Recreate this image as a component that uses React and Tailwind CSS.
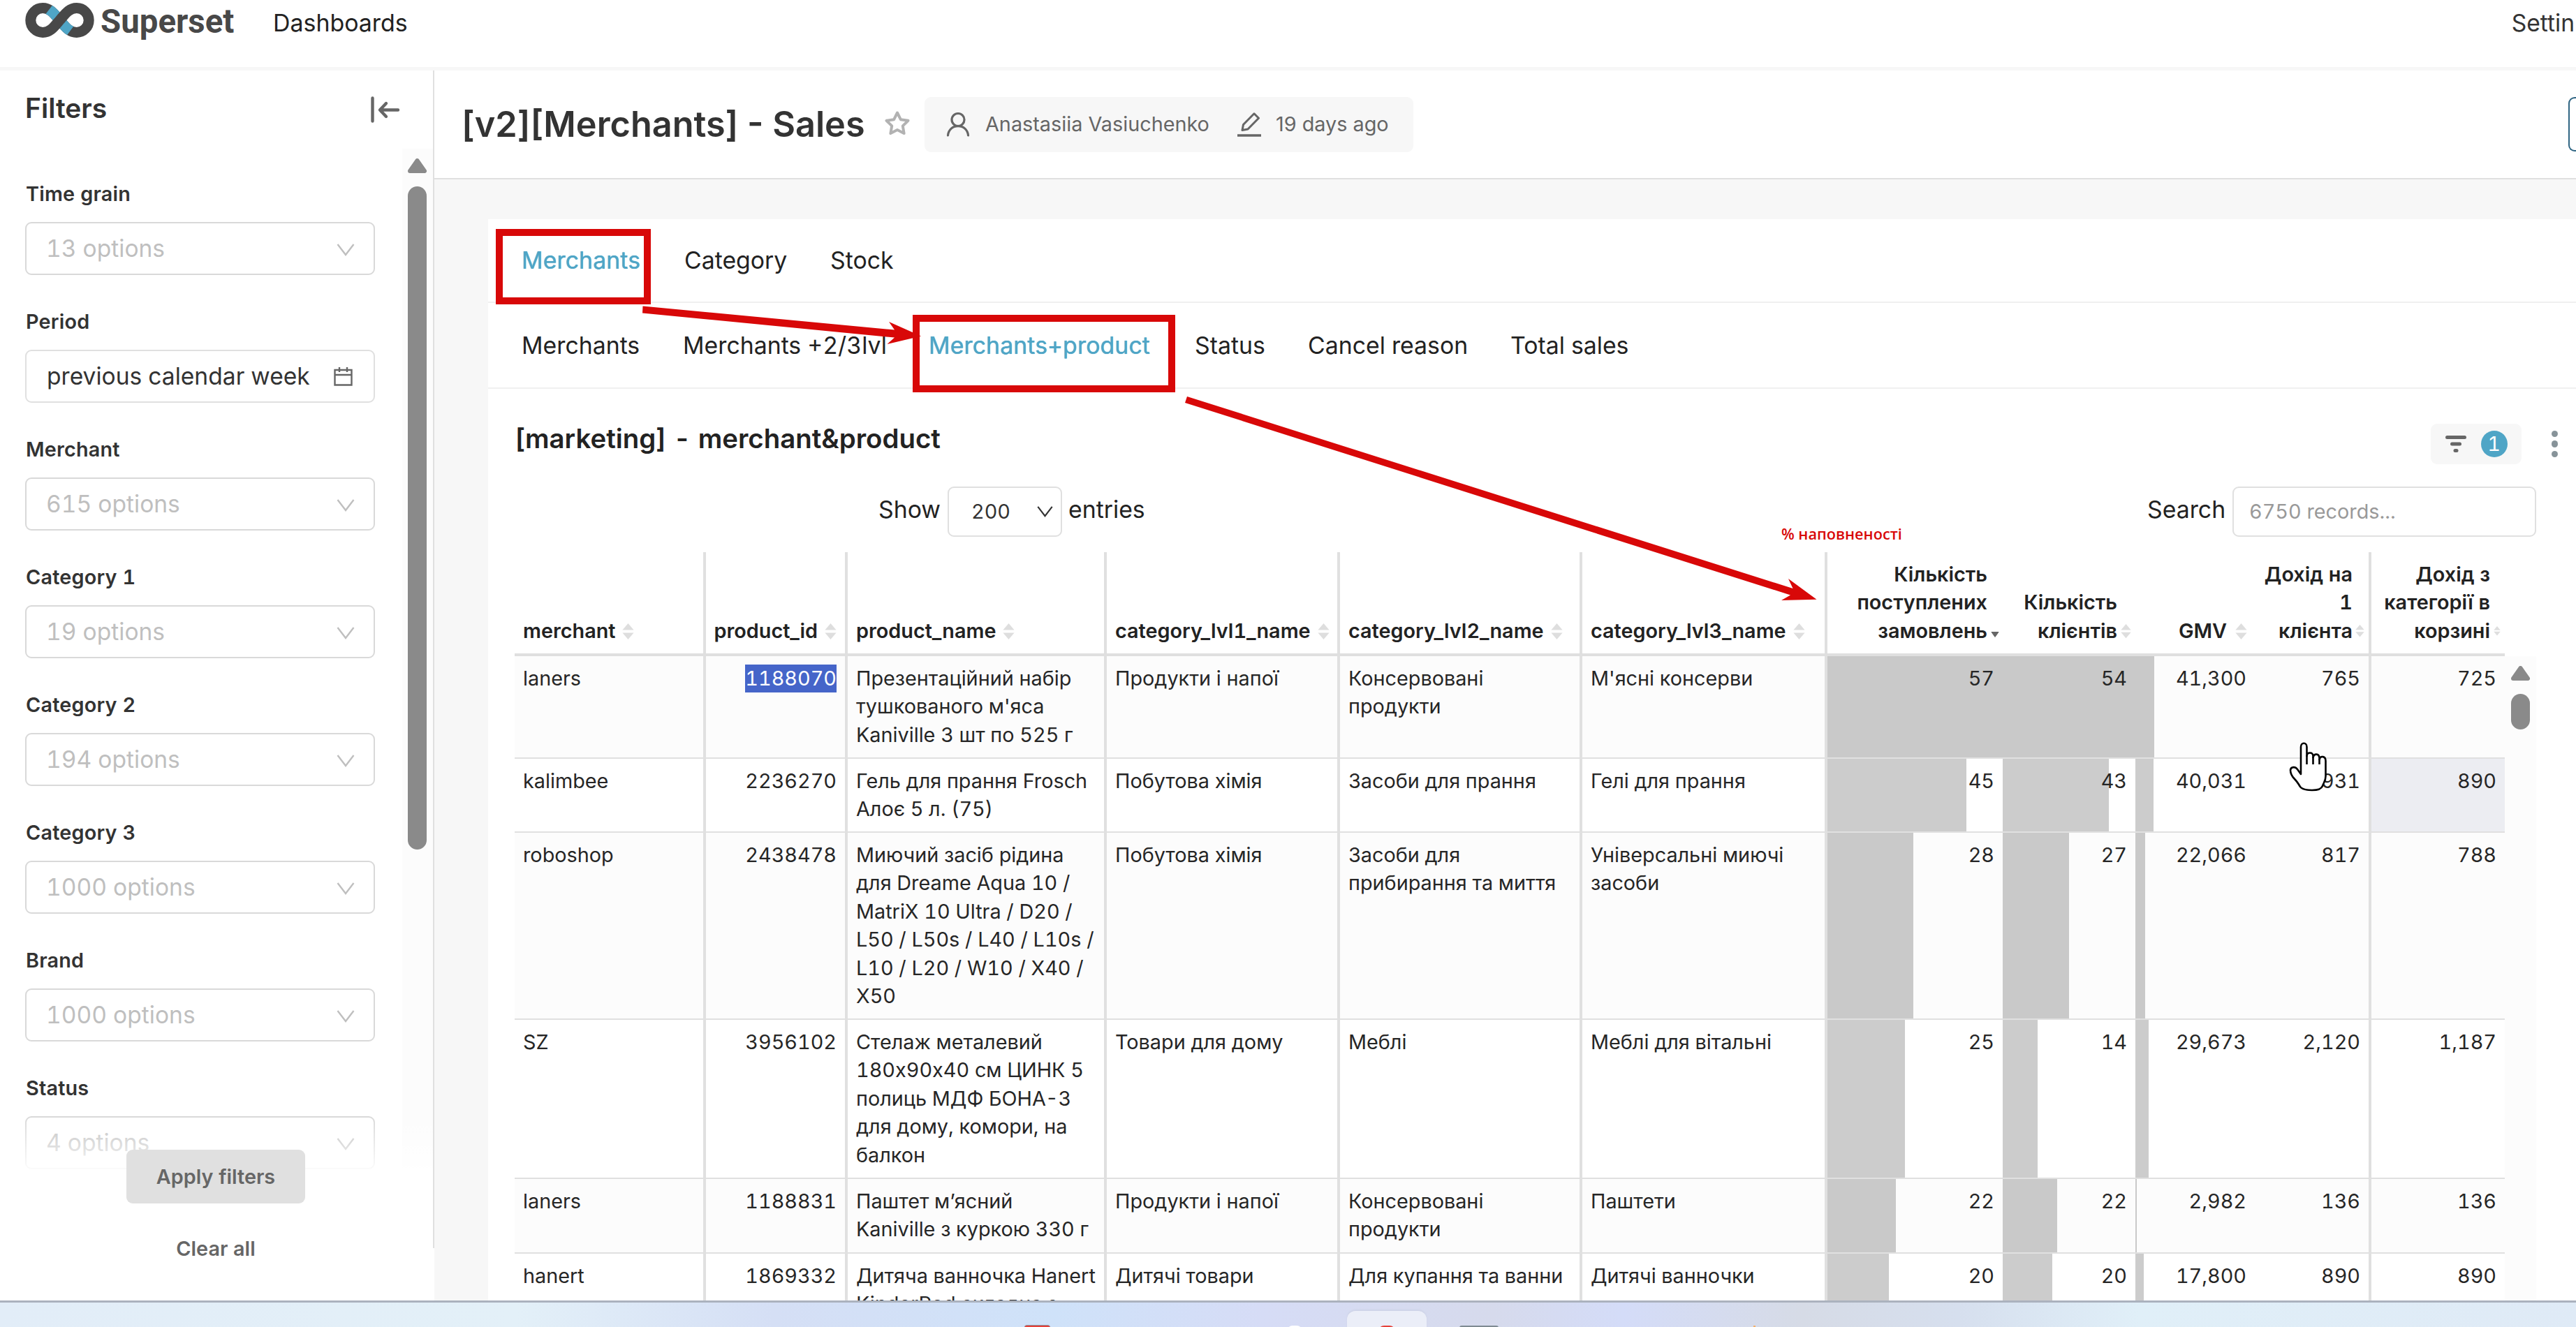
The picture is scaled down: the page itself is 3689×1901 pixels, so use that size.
import { useState } from "react";

const FILTERS = [
  { label: "Time grain", text: "13 options" },
  { label: "Period", text: "previous calendar week", date: true },
  { label: "Merchant", text: "615 options" },
  { label: "Category 1", text: "19 options" },
  { label: "Category 2", text: "194 options" },
  { label: "Category 3", text: "1000 options" },
  { label: "Brand", text: "1000 options" },
  { label: "Status", text: "4 options" },
];

const MAIN_TABS = [
  ["Merchants", "w-[233px]"],
  ["Category", "w-[209px]"],
  ["Stock", "w-[120px]"],
];

const SUB_TABS = [
  ["Merchants", "w-[231px]"],
  ["Merchants +2/3lvl", "w-[352px]"],
  ["Merchants+product", "w-[381px]"],
  ["Status", "w-[162px]"],
  ["Cancel reason", "w-[290px]"],
  ["Total sales", "w-[200px]"],
];

const GRID =
  "grid grid-cols-[274px_203px_371px_334px_347px_351px_251px_190px_171px_167px_191px]";

const COLUMNS = [
  { label: "merchant", cell: "pl-3 gap-[10px] border-r-4", icon: "w-[17px]" },
  {
    label: "product_id",
    cell: "justify-end pr-3 gap-[10px] border-r-4",
    icon: "w-[17px]",
  },
  { label: "product_name", cell: "pl-3 gap-[10px] border-r-4", icon: "w-[17px]" },
  {
    label: "category_lvl1_name",
    cell: "pl-3 gap-[10px] border-r-4",
    icon: "w-[17px]",
  },
  {
    label: "category_lvl2_name",
    cell: "pl-3 gap-[10px] border-r-4",
    icon: "w-[17px]",
  },
  {
    label: "category_lvl3_name",
    cell: "pl-3 gap-[10px] border-r-4",
    icon: "w-[17px]",
  },
  {
    label: "Кількість\nпоступлених\nзамовлень",
    cell: "justify-end pr-[5px] gap-[5px]",
    icon: "w-[12px]",
    sorted: true,
  },
  {
    label: "Кількість\nклієнтів",
    cell: "justify-end pr-[6px] gap-[5px]",
    icon: "w-[15px]",
  },
  { label: "GMV", cell: "justify-end pr-[11px] gap-3", icon: "w-[17px]" },
  {
    label: "Дохід на\n1\nклієнта",
    cell: "justify-end pr-[6px] gap-1 border-r-4",
    icon: "w-[13px]",
  },
  {
    label: "Дохід з\nкатегорії в\nкорзині",
    cell: "justify-end pr-[6px] gap-[5px]",
    icon: "w-[10px]",
  },
];

// bars: pixel widths of the in-cell bars for orders, clients and GMV
const ROWS = [
  {
    height: "h-[147px]",
    merchant: "laners",
    id: "1188070",
    name: "Презентаційний набір тушкованого м'яса Kaniville 3 шт по 525 г",
    cats: ["Продукти і напої", "Консервовані продукти", "М'ясні консерви"],
    values: ["57", "54", "41,300", "765", "725"],
    bars: [251, 190, 27],
    selected: true,
  },
  {
    height: "h-[106px]",
    merchant: "kalimbee",
    id: "2236270",
    name: "Гель для прання Frosch Алоє 5 л. (75)",
    cats: ["Побутова хімія", "Засоби для прання", "Гелі для прання"],
    values: ["45", "43", "40,031", "931", "890"],
    bars: [199, 152, 26],
    hovered: true,
  },
  {
    height: "h-[268px]",
    merchant: "roboshop",
    id: "2438478",
    name: "Миючий засіб рідина для Dreame Aqua 10 / MatriX 10 Ultra / D20 / L50 / L50s / L40 / L10s / L10 / L20 / W10 / X40 / X50",
    cats: [
      "Побутова хімія",
      "Засоби для прибирання та миття",
      "Універсальні миючі засоби",
    ],
    values: ["28", "27", "22,066", "817", "788"],
    bars: [123, 95, 14],
  },
  {
    height: "h-[228px]",
    merchant: "SZ",
    id: "3956102",
    name: "Стелаж металевий 180х90х40 см ЦИНК 5 полиць МДФ БОНА-3 для дому, комори, на балкон",
    cats: ["Товари для дому", "Меблі", "Меблі для вітальні"],
    values: ["25", "14", "29,673", "2,120", "1,187"],
    bars: [111, 50, 19],
  },
  {
    height: "h-[107px]",
    merchant: "laners",
    id: "1188831",
    name: "Паштет м’ясний Kaniville з куркою 330 г",
    cats: ["Продукти і напої", "Консервовані продукти", "Паштети"],
    values: ["22", "22", "2,982", "136", "136"],
    bars: [98, 78, 2],
  },
  {
    height: "h-[147px]",
    merchant: "hanert",
    id: "1869332",
    name: "Дитяча ванночка Hanert KinderPod складна з",
    cats: ["Дитячі товари", "Для купання та ванни", "Дитячі ванночки"],
    values: ["20", "20", "17,800", "890", "890"],
    bars: [88, 71, 12],
  },
];

function Logo() {
  return (
    <svg viewBox="0 0 99 50" className="h-[50px] w-[99px]" fill="none">
      <clipPath id="logo-strand">
        <path d="M41 1 L75 26 L58 49 L25 21.8Z" />
      </clipPath>
      <g strokeWidth="15">
        <path
          d="M49.500 25 C41 15 36 7.600 25.200 7.600 A17.400 17.400 0 1 0 25.200 42.400 M73.800 7.600 A17.400 17.400 0 1 1 73.800 42.400 C63 42.400 58 35 49.500 25"
          stroke="#484848"
        />
        <path
          d="M25.200 7.600 C36 7.600 41 15 49.500 25 C58 35 63 42.400 73.800 42.400"
          stroke="#4fa5c6"
          clipPath="url(#logo-strand)"
        />
        <path
          d="M25 42.400 H25.200 C36 42.400 41 35 49.500 25 C58 15 63 7.600 73.800 7.600 H74"
          stroke="#484848"
        />
      </g>
    </svg>
  );
}

function Chevron({ className }) {
  return (
    <svg viewBox="0 0 26 18" className={className} fill="none">
      <path d="M1.5 1 L13 16 L24.5 1" stroke="currentColor" strokeWidth="2.4" />
    </svg>
  );
}

function SortIcon({ className, sorted }) {
  if (sorted) {
    return (
      <svg viewBox="0 0 12 23" className={className}>
        <path d="M1 12.5h10l-5 7z" fill="#666" stroke="#666" strokeLinejoin="round" />
      </svg>
    );
  }
  return (
    <svg viewBox="0 0 17 23" className={className} fill="#dedede">
      <path d="M8.5 0 L16.6 9.6 H0.4Z" />
      <path d="M8.5 23 L16.6 13.4 H0.4Z" />
    </svg>
  );
}

function ScrollArrow() {
  return (
    <svg viewBox="0 0 27 21" className="h-[21px] w-[27px]">
      <path
        d="M13.5 3 L24 18 H3Z"
        fill="#8a8a8a"
        stroke="#8a8a8a"
        strokeWidth="6"
        strokeLinejoin="round"
      />
    </svg>
  );
}

function Navbar() {
  return (
    <header className="flex h-[101px] shrink-0 justify-between border-b-[5px] border-[#f7f7f7] bg-white pl-9">
      <div className="flex">
        <div className="pt-1">
          <Logo />
        </div>
        <span className="mt-[3px] ml-[9px] w-[247px] font-['Roboto',sans-serif] text-[47.4px] leading-[56px] font-bold text-[#484848]">
          Superset
        </span>
        <span className="mt-3 text-[33.9px] leading-[41px] text-[#222]">
          Dashboards
        </span>
      </div>
      <span className="mt-3 pr-[2px] text-[33.6px] leading-[41px] text-[#333]">
        Settin
      </span>
    </header>
  );
}

function FilterField({ label, text, date }) {
  return (
    <div className="mb-[47px] last:mb-0">
      <label className="mb-5 block pl-[1px] text-[28.8px] leading-10 font-semibold tracking-[0.2px] text-[#333]">
        {label}
      </label>
      <div
        className={
          date
            ? "flex h-[76px] items-center justify-between rounded-[9px] border-2 border-[#e0e0e0] pr-[30px] pl-[29px] text-[33.6px] text-[#333]"
            : "flex h-[76px] items-center justify-between rounded-[9px] border-2 border-[#d9d9d9] pr-[27px] pl-[28px] text-[33.6px] text-[#bfbfbf]"
        }
      >
        <span>{text}</span>
        {date ? (
          <svg viewBox="0 0 27 27" className="size-[27px] text-[#666]" fill="none">
            <path
              d="M1.5 4h24v21.5h-24zM1.5 11h24M8 0v7M19 0v7"
              stroke="currentColor"
              strokeWidth="2.4"
            />
          </svg>
        ) : (
          <Chevron className="mt-1 h-[18px] w-[26px]" />
        )}
      </div>
    </div>
  );
}

function Sidebar() {
  return (
    <aside className="relative flex h-[1762px] w-[622px] shrink-0 flex-col overflow-hidden bg-white tabular-nums">
      <div className="flex h-[112px] shrink-0 items-start justify-between pr-[49px] pl-[36px]">
        <h2 className="mt-[29px] text-[39px] leading-[50px] font-semibold text-[#333]">
          Filters
        </h2>
        <svg
          viewBox="0 0 42 38"
          className="mt-[37px] h-[38px] w-[42px]"
          fill="none"
          stroke="#666"
          strokeWidth="4.4"
          strokeLinecap="round"
          strokeLinejoin="round"
        >
          <path d="M2.5 2.5v33M39 19.5H14M22 10l-9 9.5 9 9.5" />
        </svg>
      </div>
      <div className="flex min-h-0 flex-1">
        <div className="w-[576px] shrink-0 pt-[45px] pr-[39px] pl-9">
          {FILTERS.map((f) => (
            <FilterField key={f.label} {...f} />
          ))}
        </div>
        <div className="flex h-[1460px] flex-1 flex-col items-center bg-[#fcfcfc] pt-[14px] pr-[3px]">
          <ScrollArrow />
          <div className="mt-[19px] h-[950px] w-[27px] rounded-full bg-[#8a8a8a]" />
        </div>
      </div>

      {/* Actions fade over the end of the filter list */}
      <div className="absolute bottom-0 left-0 flex h-[264px] w-[620px] flex-col items-center bg-linear-to-b from-white/0 to-white to-[86px] pt-12 text-[28.8px] font-semibold text-[#666]">
        <button className="-ml-[2px] h-[77px] w-[256px] rounded-[9px] bg-[#e0e0e0]">
          Apply filters
        </button>
        <button className="mt-[43px] -ml-[2px] h-[40px]">Clear all</button>
      </div>
      <div className="absolute top-0 right-0 h-[1687px] w-[2px] bg-[#e0e0e0]" />
    </aside>
  );
}

function DashboardHeader() {
  return (
    <div className="flex h-[156px] shrink-0 items-center justify-between border-b-2 border-[#e0e0e0] bg-white pl-[39px]">
      <div className="flex items-center">
        <h1 className="w-[605px] text-[50.4px] leading-[60px] font-semibold whitespace-nowrap text-[#333]">
          [v2][Merchants] - Sales
        </h1>
        <svg viewBox="0 0 38 36" className="-mt-1 mr-5 h-9 w-[38px]" fill="none">
          <path
            d="M19 3.5 L23.8 13.2 L34.5 14.8 L26.8 22.4 L28.6 33 L19 28 L9.4 33 L11.2 22.4 L3.5 14.8 L14.2 13.2Z"
            stroke="#b2b2b2"
            strokeWidth="4"
            strokeLinejoin="round"
          />
        </svg>
        <div className="flex h-[79px] w-[700px] items-center rounded-[9px] bg-[#f7f7f7] pl-[31px] text-[28.8px] text-[#666]">
          <svg viewBox="0 0 34 36" className="mr-[22px] h-9 w-[34px]" fill="none">
            <g stroke="currentColor" strokeWidth="3.2" strokeLinecap="round">
              <circle cx="17" cy="11.5" r="9" />
              <path d="M2.5 34c.6-8 6.600-13.300 14.500-13.300S30.900 26 31.500 34" />
            </g>
          </svg>
          <span className="w-[360px]">Anastasiia Vasiuchenko</span>
          <svg viewBox="0 0 36 36" className="mr-[20px] h-9 w-9" fill="none">
            <path
              d="M8 26.500 L9.500 18.500 L25 2.800 L31.500 9.300 L16 25 Z"
              stroke="currentColor"
              strokeWidth="3"
              strokeLinejoin="round"
            />
            <path d="M1 34h34" stroke="currentColor" strokeWidth="3.600" />
          </svg>
          <span>19 days ago</span>
        </div>
      </div>
      <div className="h-[78px] w-[11px] rounded-l-[9px] border-y-2 border-l-2 border-[#2f6583]" />
    </div>
  );
}

function Tabs({ tabs, active, onChange, className }) {
  return (
    <nav className={className}>
      {tabs.map(([label, width]) => (
        <button
          key={label}
          onClick={() => onChange(label)}
          className={`${width} text-left whitespace-nowrap ${
            active === label
              ? "tracking-[0.1px] text-[#4fa5c6] [text-shadow:0_0_0.8px_currentcolor]"
              : "text-[#222]"
          }`}
        >
          {label}
        </button>
      ))}
    </nav>
  );
}

function ChartHeader() {
  return (
    <div className="flex items-start justify-between pt-[50px] pr-[26px]">
      <h3 className="text-[38.4px] leading-[42px] font-semibold text-[#222]">
        [marketing] - merchant&amp;product
      </h3>
      <div className="flex items-center">
        <div className="flex h-[58px] w-[130px] items-center justify-between rounded-[9px] bg-[#f7f7f7] pr-5 pl-[21px]">
          <svg viewBox="0 0 30 24" className="h-6 w-[30px]" fill="#666">
            <rect x="0" y="0" width="30" height="5" rx="2.5" />
            <rect x="7" y="9.500" width="16" height="5" rx="2.5" />
            <rect x="11.500" y="19" width="7" height="5" rx="2.500" />
          </svg>
          <span className="flex size-[38px] items-center justify-center rounded-full bg-[#4fa5c6] text-[28.8px] text-white">
            1
          </span>
        </div>
        <div className="ml-[43px] flex flex-col gap-[5px]">
          <i className="size-[9.5px] rounded-full bg-[#879399]" />
          <i className="size-[9.5px] rounded-full bg-[#879399]" />
          <i className="size-[9.5px] rounded-full bg-[#879399]" />
        </div>
      </div>
    </div>
  );
}

function TableControls() {
  return (
    <div className="mt-8 flex h-[72px] w-[2895px] items-center pl-[521px] text-[33.8px] text-[#222]">
      <span className="w-[99px] pb-[6px]">Show</span>
      <div className="flex h-[72px] w-[164px] items-center justify-between rounded-[9px] border-2 border-[#e0e0e0] pr-[10px] pl-[32px] text-[28.8px] text-[#333]">
        200
        <Chevron className="h-[16px] w-[25px]" />
      </div>
      <span className="ml-[9px] pb-[6px]">entries</span>
      <span className="ml-auto w-[122px] pb-[6px]">Search</span>
      <div className="flex h-[72px] w-[435px] items-center rounded-[9px] border-2 border-[#e0e0e0] pl-[22px] text-[28.8px] text-[#999]">
        6750 records...
      </div>
    </div>
  );
}

function BarCell({ value, bar }) {
  return (
    <div className="relative h-full">
      <div className="absolute inset-y-0 left-0 bg-black/20" style={{ width: bar }} />
      <span className="relative block pt-3 pr-3 text-right">{value}</span>
    </div>
  );
}

function TableRow({ row, striped }) {
  return (
    <div
      className={`${GRID} ${row.height} border-b-2 border-[#e0e0e0] ${
        striped ? "bg-[#fcfcfc]" : "bg-white"
      }`}
    >
      <div className="border-r-4 border-[#e0e0e0] px-3 pt-3">{row.merchant}</div>
      <div className="border-r-4 border-[#e0e0e0] px-3 pt-3 text-right">
        <span
          className={row.selected ? "inline-block bg-[#4565c9] text-white" : ""}
        >
          {row.id}
        </span>
      </div>
      <div className="border-r-4 border-[#e0e0e0] px-3 pt-3">{row.name}</div>
      {row.cats.map((c) => (
        <div key={c} className="border-r-4 border-[#e0e0e0] px-3 pt-3">
          {c}
        </div>
      ))}
      {row.bars.map((bar, i) => (
        <BarCell key={i} bar={bar} value={row.values[i]} />
      ))}
      <div className="border-r-4 border-[#e0e0e0] px-3 pt-3 text-right">
        {row.values[3]}
      </div>
      <div className={`px-3 pt-3 text-right ${row.hovered ? "bg-[#ecedf2]" : ""}`}>
        {row.values[4]}
      </div>
    </div>
  );
}

function DataTable() {
  return (
    <div className="mt-[22px] w-[2895px] text-[28.8px] leading-[40.4px] text-[#262626]">
      <div className={`${GRID} h-[149px] w-[2850px] border-b-4 border-[#dfdfdf]`}>
        {COLUMNS.map((col) => (
          <div
            key={col.label}
            className={`${col.cell} flex items-end border-[#e0e0e0] pb-3 font-semibold whitespace-nowrap text-[#222]`}
          >
            <span
              className={
                col.label.includes("\n") || col.label === "GMV"
                  ? "text-right whitespace-pre"
                  : ""
              }
            >
              {col.label}
            </span>
            <span className="flex h-10 items-center">
              <SortIcon className={col.icon} sorted={col.sorted} />
            </span>
          </div>
        ))}
      </div>
      <div className="flex">
        <div className="w-[2850px]">
          {ROWS.map((row, i) => (
            <TableRow key={row.id} row={row} striped={i % 2 === 0} />
          ))}
        </div>
        <div className="flex flex-1 flex-col items-center bg-[#fcfcfc] pt-[14px]">
          <ScrollArrow />
          <div className="mt-[19px] h-[51px] w-[27px] rounded-full bg-[#8a8a8a]" />
        </div>
      </div>
    </div>
  );
}

function Annotations() {
  return (
    <>
      <div className="absolute top-[328px] left-[710px] h-[108px] w-[222px] border-[10px] border-[#d80808]" />
      <div className="absolute top-[451px] left-[1307px] h-[111px] w-[376px] border-[10px] border-[#d80808]" />
      <svg
        viewBox="0 0 3689 1901"
        className="pointer-events-none absolute inset-0 h-[1901px] w-[3689px]"
      >
        <g fill="#d80808">
          <path d="M920.500 438.500 L1281 472.500 L1273 461 L1319 481.500 L1270.500 493 L1281 483.500 L920 448.500Z" />
          <path d="M1700 568 L2567.500 843 L2561 829 L2601.500 858.700 L2551 860 L2564 852.500 L1697 577Z" />
        </g>
        {/* Hand cursor */}
        <path
          d="M3295 1109 V1070 C3295 1063 3303.500 1063 3303.500 1070 V1083 C3304 1077 3312 1077 3312.500 1083 V1085 C3314 1079 3321 1079 3321.500 1086 V1088 C3323 1082 3330.500 1083 3330.500 1090 V1112 C3330.500 1119 3327.500 1121 3326 1126 C3324 1131 3318 1132 3311 1132 C3303 1132 3297 1131 3294 1127 C3291 1122 3289 1119 3286 1116 C3282 1112 3280 1107 3280 1103 C3281 1098 3287 1098 3290 1102Z"
          fill="#fff"
          stroke="#000"
          strokeWidth="2.600"
          strokeLinejoin="round"
        />
        <path
          d="M3303.500 1082 V1095 M3312.500 1084 V1095 M3321.500 1087 V1095"
          stroke="#000"
          strokeWidth="2.600"
        />
      </svg>
      <span className="absolute top-[750px] left-[2551px] font-['Open_Sans',sans-serif] text-[21.7px] leading-[30px] font-semibold whitespace-nowrap text-[#d80808]">
        % наповненості
      </span>
    </>
  );
}

function Taskbar() {
  return (
    <footer className="relative h-[38px] shrink-0 overflow-hidden border-t-[3px] border-[#abb2be] bg-[linear-gradient(90deg,#e2edf8_0%,#e3f0f8_20%,#d5dff5_30%,#cfe2f9_41%,#d6dcf6_49%,#d6daec_58%,#d4dcf8_63%,#d6dbe6_70%,#d6dfee_76%,#e0eff8_83%,#dfeaf6_100%)]">
      <div className="absolute top-[12px] left-[1929px] h-[40px] w-[114px] rounded-t-[12px] bg-[#ebeef8] shadow-[0_-2px_2px_#ced4e8]" />
      <div className="absolute top-[32px] left-[1467px] h-[8px] w-[37px] rounded-t-[4px] border-t border-[#8d8f9b] bg-[#e5413a]" />
      <div className="absolute top-[33px] left-[1843px] h-[8px] w-[22px] rounded-t-full bg-white" />
      <div className="absolute top-[33px] left-[1974px] h-[8px] w-[24px] rounded-t-full bg-[#e5413a]" />
      <div className="absolute top-[33px] left-[2090px] h-[8px] w-[56px] rounded-t-[3px] bg-[#7f8a92]" />
      <div className="absolute top-[33px] left-[2511px] h-[4px] w-[3px] bg-[#f3b06a]" />
    </footer>
  );
}

export default function App() {
  const [mainTab, setMainTab] = useState("Merchants");
  const [subTab, setSubTab] = useState("Merchants+product");

  return (
    <div className="relative flex h-[1901px] w-[3689px] flex-col overflow-hidden bg-white font-['Inter',sans-serif]">
      <Navbar />
      <div className="flex h-[1762px] shrink-0 overflow-hidden">
        <Sidebar />
        <main className="flex min-w-0 flex-1 flex-col bg-[#f7f7f7]">
          <DashboardHeader />
          <div className="mt-[57px] ml-[77px] min-h-0 flex-1 bg-white tabular-nums">
            <Tabs
              tabs={MAIN_TABS}
              active={mainTab}
              onChange={setMainTab}
              className="flex h-[120px] items-center border-b-2 border-[#f0f0f0] pl-[48px] text-[33.8px]"
            />
            <Tabs
              tabs={SUB_TABS}
              active={subTab}
              onChange={setSubTab}
              className="flex h-[123px] items-center border-b-2 border-[#f0f0f0] pt-[2px] pl-[48px] text-[33.8px]"
            />
            <div className="pl-[38px]">
              <ChartHeader />
              <TableControls />
              <DataTable />
            </div>
          </div>
        </main>
      </div>
      <Taskbar />
      <Annotations />
    </div>
  );
}
